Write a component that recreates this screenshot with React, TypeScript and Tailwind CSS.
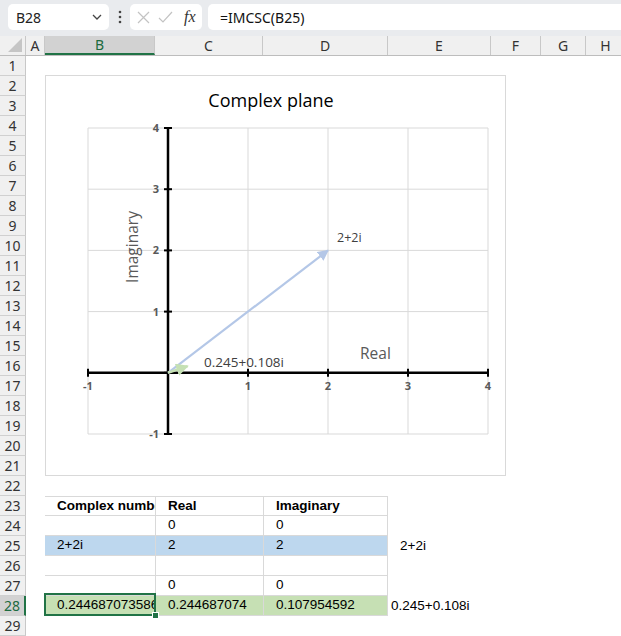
import React from 'react';

const COLS = [
  { key: 'A', w: 'w-[19px]' },
  { key: 'B', w: 'w-[110px]' },
  { key: 'C', w: 'w-[108px]' },
  { key: 'D', w: 'w-[125px]' },
  { key: 'E', w: 'w-[103px]' },
  { key: 'F', w: 'w-[50px]' },
  { key: 'G', w: 'w-[45px]' },
  { key: 'H', w: 'w-[40px]' },
];

type Cell = { text?: string; bold?: boolean; indent?: boolean };
type RowDef = { cells: { [col: string]: Cell }; fill?: string; table?: boolean };

const rows: { [n: number]: RowDef } = {
  23: { table: true, cells: { B: { text: 'Complex number', bold: true, indent: true }, C: { text: 'Real', bold: true, indent: true }, D: { text: 'Imaginary', bold: true, indent: true } } },
  24: { table: true, cells: { C: { text: '0', indent: true }, D: { text: '0', indent: true } } },
  25: { table: true, fill: 'bg-[#bdd7ee]', cells: { B: { text: '2+2i', indent: true }, C: { text: '2', indent: true }, D: { text: '2', indent: true }, E: { text: '2+2i', indent: true } } },
  26: { table: true, cells: {} },
  27: { table: true, cells: { C: { text: '0', indent: true }, D: { text: '0', indent: true } } },
  28: { table: true, fill: 'bg-[#c6e0b4]', cells: { B: { text: '0.244687073586', indent: true }, C: { text: '0.244687074', indent: true }, D: { text: '0.107954592', indent: true }, E: { text: '0.245+0.108i' } } },
};

// chart coordinates (relative to chart box)
const X0 = 122;
const UX = 80;
const Y0 = 296.8;
const UY = 61.2;
const px = (v: number) => X0 + v * UX;
const py = (v: number) => Y0 - v * UY;

const Chart = () => {
  const ticks = [-1, 0, 1, 2, 3, 4];
  return (
    <div className="absolute left-[45px] top-[19px] w-[461px] h-[401px] bg-white border border-[#d9d9d9]">
      <svg width="461" height="401" className="absolute left-0 top-0" style={{ fontFamily: '"Open Sans", "Liberation Sans", sans-serif' }}>
        <defs>
          <marker id="blueHead" viewBox="0 0 10 10" refX="9" refY="5" markerWidth="5" markerHeight="5" orient="auto">
            <path d="M0 0 L10 5 L0 10 z" fill="#b4c7e7" />
          </marker>
          <marker id="greenHead" viewBox="0 0 10 10" refX="9" refY="5" markerWidth="5" markerHeight="5" orient="auto">
            <path d="M0 0 L10 5 L0 10 z" fill="#c5e0b4" />
          </marker>
        </defs>
        {/* gridlines */}
        {ticks.map(t => (
          <line key={'v' + t} x1={px(t)} x2={px(t)} y1={py(4)} y2={py(-1)} stroke="#d9d9d9" strokeWidth="1" />
        ))}
        {ticks.map(t => (
          <line key={'h' + t} x1={px(-1)} x2={px(4)} y1={py(t)} y2={py(t)} stroke="#d9d9d9" strokeWidth="1" />
        ))}
        {/* axes */}
        <line x1={px(-1)} x2={px(4)} y1={Y0} y2={Y0} stroke="#000" strokeWidth="2.5" />
        <line x1={X0} x2={X0} y1={py(4)} y2={py(-1)} stroke="#000" strokeWidth="2.5" />
        {ticks.map(t => (
          <line key={'tx' + t} x1={px(t)} x2={px(t)} y1={Y0 - 4} y2={Y0 + 4} stroke="#000" strokeWidth="2" />
        ))}
        {ticks.map(t => (
          <line key={'ty' + t} x1={X0 - 4} x2={X0 + 4} y1={py(t)} y2={py(t)} stroke="#000" strokeWidth="2" />
        ))}
        {/* tick labels */}
        {ticks.filter(t => t !== 0).map(t => (
          <text key={'lx' + t} x={px(t)} y={Y0 + 17} textAnchor="middle" fontSize="11" fontWeight="bold" fill="#595959">{t}</text>
        ))}
        {ticks.filter(t => t !== 0).map(t => (
          <text key={'ly' + t} x={X0 - 9} y={py(t) + 4} textAnchor="end" fontSize="11" fontWeight="bold" fill="#595959">{t}</text>
        ))}
        {/* vectors */}
        <line x1={X0} y1={Y0} x2={px(2)} y2={py(2)} stroke="#b4c7e7" strokeWidth="2.2" markerEnd="url(#blueHead)" />
        <line x1={X0} y1={Y0} x2={px(0.245)} y2={py(0.108)} stroke="#c5e0b4" strokeWidth="2.5" markerEnd="url(#greenHead)" />
        {/* title and labels */}
        <text x="225" y="31" textAnchor="middle" fontSize="18" fill="#000">Complex plane</text>
        <text x={px(2) + 9} y={py(2) - 8} fontSize="12.5" fill="#404040">2+2i</text>
        <text x="158" y="291" fontSize="13.5" fill="#404040">0.245+0.108i</text>
        <text x="314" y="283" fontSize="15.5" fill="#595959">Real</text>
        <text x="92" y="171" fontSize="15.5" fill="#595959" textAnchor="middle" transform="rotate(-90 92 171)">Imaginary</text>
      </svg>
    </div>
  );
};

const Toolbar = () => (
  <div className="h-[36px] bg-[#e9ebee] flex items-start pt-[4px] pl-[8px] gap-0" style={{ fontFamily: '"Noto Sans", "Open Sans", sans-serif' }}>
    <div className="w-[101px] shrink-0 h-[26px] bg-white rounded-[5px] flex items-center justify-between pl-[8px] pr-[6px] text-[14px] text-[#222]">
      <span>B28</span>
      <svg width="12" height="12" viewBox="0 0 12 12"><path d="M2 4 L6 8 L10 4" fill="none" stroke="#444" strokeWidth="1.3" /></svg>
    </div>
    <div className="w-[21px] shrink-0 h-[26px] flex items-center justify-center">
      <svg width="4" height="14" viewBox="0 0 4 14"><circle cx="2" cy="2" r="1.3" fill="#444" /><circle cx="2" cy="7" r="1.3" fill="#444" /><circle cx="2" cy="12" r="1.3" fill="#444" /></svg>
    </div>
    <div className="w-[72px] shrink-0 h-[26px] bg-white rounded-[5px] flex items-center pl-[7px] gap-[8px]">
      <svg width="13" height="13" viewBox="0 0 13 13"><path d="M1 1 L12 12 M12 1 L1 12" stroke="#c3c3c3" strokeWidth="1.2" /></svg>
      <svg width="15" height="13" viewBox="0 0 15 13"><path d="M1 7 L5 11 L14 1" fill="none" stroke="#c3c3c3" strokeWidth="1.2" /></svg>
      <span className="ml-[3px] text-[16px] italic text-[#333]" style={{ fontFamily: '"Liberation Serif", serif' }}>fx</span>
    </div>
    <div className="ml-[6px] flex-1 h-[26px] bg-white rounded-l-[5px] flex items-center pl-[12px] text-[14px] text-[#111]">
      =IMCSC(B25)
    </div>
  </div>
);

const ColumnHeader = () => (
  <div className="flex h-[20px] bg-[#f0f0f0] border-b border-[#bdbdbd] text-[14px] text-[#333] overflow-hidden" style={{ fontFamily: '"Noto Sans", "Open Sans", sans-serif' }}>
    <div className="w-[26px] shrink-0 h-full border-r border-[#c8c8c8] relative">
      <svg width="14" height="14" viewBox="0 0 14 14" className="absolute right-[3px] bottom-[3px]"><path d="M14 0 L14 14 L0 14 z" fill="#c5c5c5" /></svg>
    </div>
    {COLS.map(c => (
      <div
        key={c.key}
        className={`${c.w} shrink-0 h-full flex items-center justify-center border-r border-[#c8c8c8] ${c.key === 'B' ? 'bg-[#d2d2d2] text-[#1d6b3f] border-b-2 border-b-[#217346]' : ''}`}
      >
        {c.key}
      </div>
    ))}
  </div>
);

export default function App() {
  const rowNums = Array.from({ length: 29 }, (_, i) => i + 1);
  return (
    <div className="w-[621px] h-[636px] overflow-hidden bg-white">
      <Toolbar />
      <ColumnHeader />
      <div className="relative">
        {rowNums.map(n => {
          const r = rows[n];
          const selected = n === 28;
          return (
            <div key={n} className="flex h-[20px]">
              <div
                className={`w-[26px] shrink-0 h-full flex items-center justify-center border-b border-[#d0d0d0] text-[14px] ${selected ? 'bg-[#d2d2d2] text-[#1d6b3f] border-r-2 border-r-[#217346]' : 'bg-[#f0f0f0] text-[#333] border-r border-r-[#c8c8c8]'}`}
                style={{ fontFamily: '"Noto Sans", "Open Sans", sans-serif' }}
              >
                {n}
              </div>
              {COLS.map(c => {
                const cell = r?.cells[c.key];
                const inTable = r?.table && (c.key === 'B' || c.key === 'C' || c.key === 'D');
                return (
                  <div
                    key={c.key}
                    className={`${c.w} shrink-0 h-full flex items-center text-[13.5px] text-black whitespace-nowrap ${
                      inTable ? `border-b border-[#d9d9d9] ${c.key !== 'B' ? 'border-l' : ''} ${c.key === 'D' ? 'border-r' : ''} ${n === 23 ? 'border-t' : ''} ${r?.fill ?? ''}` : ''
                    } ${cell?.indent ? 'pl-[12px]' : 'pl-[3px]'} ${c.key === 'E' ? 'overflow-visible' : 'overflow-hidden'} ${cell?.bold ? 'font-bold' : ''}`}
                    style={{ fontFamily: '"Liberation Sans", Arial, sans-serif' }}
                  >
                    {cell?.text}
                  </div>
                );
              })}
            </div>
          );
        })}
        {/* selection border around B28 and its fill handle */}
        <div className="absolute left-[44px] top-[537px] w-[112px] h-[23px] border-2 border-[#217346]" />
        <div className="absolute left-[152px] top-[556px] w-[7px] h-[7px] bg-[#217346] border border-white" />
        <Chart />
      </div>
    </div>
  );
}
